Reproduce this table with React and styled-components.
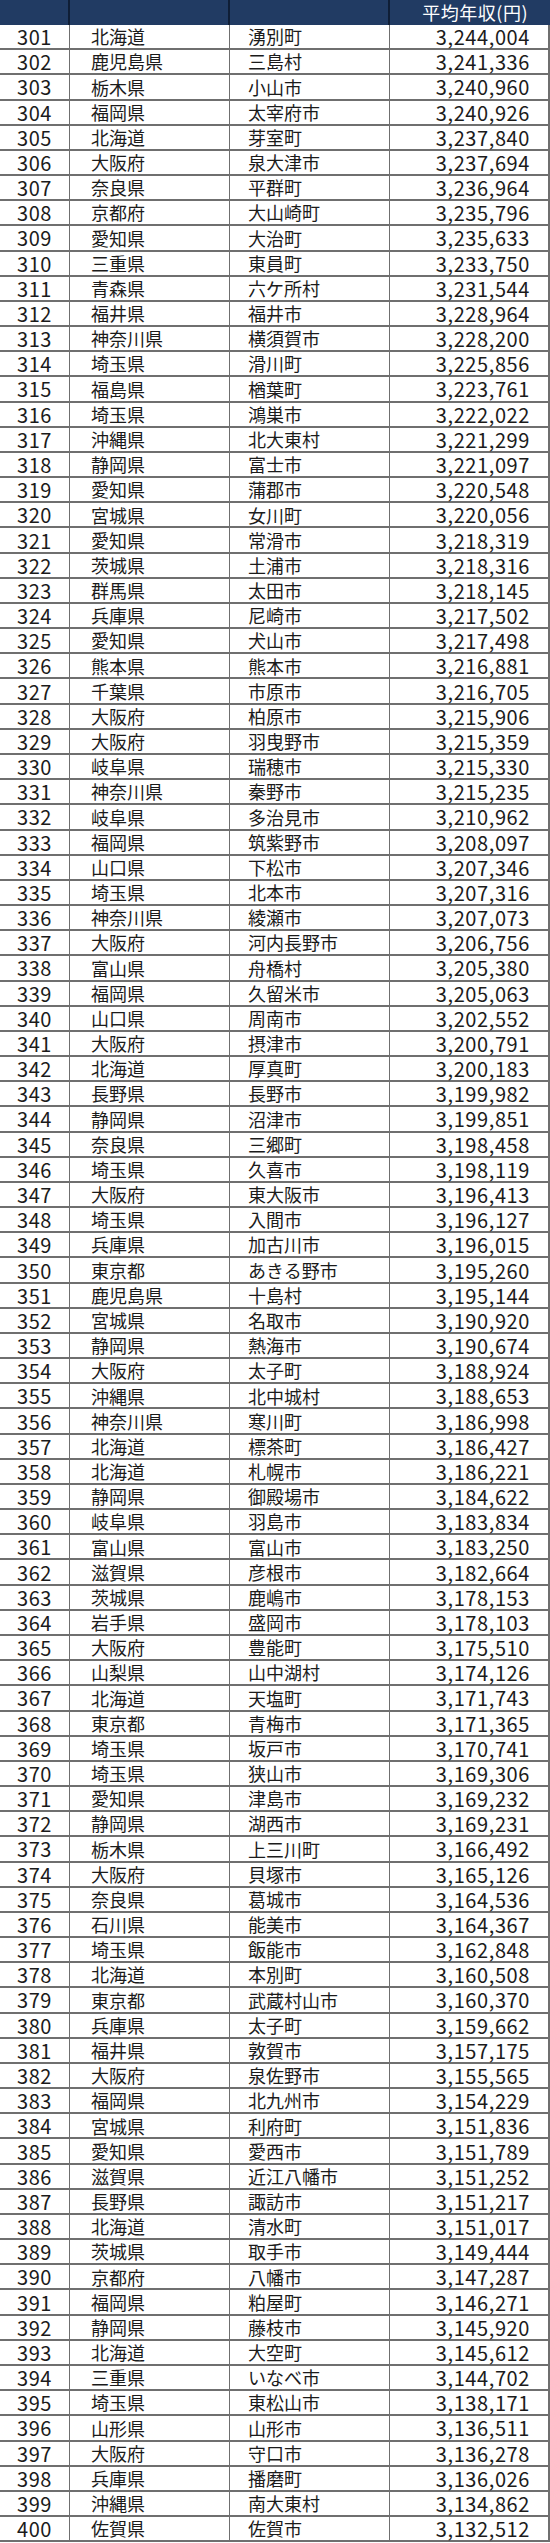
import styled, { createGlobalStyle } from 'styled-components';

const GlobalStyle = createGlobalStyle`
  html, body {
    margin: 0;
    padding: 0;
    background: #ffffff;
  }
  body {
    font-family: "Noto Sans CJK JP", "Noto Sans", sans-serif;
    color: #1b1b1b;
  }
`;

const ROWS = `
301,北海道,湧別町,3244004
302,鹿児島県,三島村,3241336
303,栃木県,小山市,3240960
304,福岡県,太宰府市,3240926
305,北海道,芽室町,3237840
306,大阪府,泉大津市,3237694
307,奈良県,平群町,3236964
308,京都府,大山崎町,3235796
309,愛知県,大治町,3235633
310,三重県,東員町,3233750
311,青森県,六ケ所村,3231544
312,福井県,福井市,3228964
313,神奈川県,横須賀市,3228200
314,埼玉県,滑川町,3225856
315,福島県,楢葉町,3223761
316,埼玉県,鴻巣市,3222022
317,沖縄県,北大東村,3221299
318,静岡県,富士市,3221097
319,愛知県,蒲郡市,3220548
320,宮城県,女川町,3220056
321,愛知県,常滑市,3218319
322,茨城県,土浦市,3218316
323,群馬県,太田市,3218145
324,兵庫県,尼崎市,3217502
325,愛知県,犬山市,3217498
326,熊本県,熊本市,3216881
327,千葉県,市原市,3216705
328,大阪府,柏原市,3215906
329,大阪府,羽曳野市,3215359
330,岐阜県,瑞穂市,3215330
331,神奈川県,秦野市,3215235
332,岐阜県,多治見市,3210962
333,福岡県,筑紫野市,3208097
334,山口県,下松市,3207346
335,埼玉県,北本市,3207316
336,神奈川県,綾瀬市,3207073
337,大阪府,河内長野市,3206756
338,富山県,舟橋村,3205380
339,福岡県,久留米市,3205063
340,山口県,周南市,3202552
341,大阪府,摂津市,3200791
342,北海道,厚真町,3200183
343,長野県,長野市,3199982
344,静岡県,沼津市,3199851
345,奈良県,三郷町,3198458
346,埼玉県,久喜市,3198119
347,大阪府,東大阪市,3196413
348,埼玉県,入間市,3196127
349,兵庫県,加古川市,3196015
350,東京都,あきる野市,3195260
351,鹿児島県,十島村,3195144
352,宮城県,名取市,3190920
353,静岡県,熱海市,3190674
354,大阪府,太子町,3188924
355,沖縄県,北中城村,3188653
356,神奈川県,寒川町,3186998
357,北海道,標茶町,3186427
358,北海道,札幌市,3186221
359,静岡県,御殿場市,3184622
360,岐阜県,羽島市,3183834
361,富山県,富山市,3183250
362,滋賀県,彦根市,3182664
363,茨城県,鹿嶋市,3178153
364,岩手県,盛岡市,3178103
365,大阪府,豊能町,3175510
366,山梨県,山中湖村,3174126
367,北海道,天塩町,3171743
368,東京都,青梅市,3171365
369,埼玉県,坂戸市,3170741
370,埼玉県,狭山市,3169306
371,愛知県,津島市,3169232
372,静岡県,湖西市,3169231
373,栃木県,上三川町,3166492
374,大阪府,貝塚市,3165126
375,奈良県,葛城市,3164536
376,石川県,能美市,3164367
377,埼玉県,飯能市,3162848
378,北海道,本別町,3160508
379,東京都,武蔵村山市,3160370
380,兵庫県,太子町,3159662
381,福井県,敦賀市,3157175
382,大阪府,泉佐野市,3155565
383,福岡県,北九州市,3154229
384,宮城県,利府町,3151836
385,愛知県,愛西市,3151789
386,滋賀県,近江八幡市,3151252
387,長野県,諏訪市,3151217
388,北海道,清水町,3151017
389,茨城県,取手市,3149444
390,京都府,八幡市,3147287
391,福岡県,粕屋町,3146271
392,静岡県,藤枝市,3145920
393,北海道,大空町,3145612
394,三重県,いなべ市,3144702
395,埼玉県,東松山市,3138171
396,山形県,山形市,3136511
397,大阪府,守口市,3136278
398,兵庫県,播磨町,3136026
399,沖縄県,南大東村,3134862
400,佐賀県,佐賀市,3132512
`
  .trim()
  .split('\n')
  .map((line) => {
    const [rank, pref, city, income] = line.split(',');
    return { rank, pref, city, income: Number(income).toLocaleString('en-US') };
  });

const Table = styled.div`
  width: 550px;
  display: flex;
  flex-direction: column;
`;

const HeaderRow = styled.div`
  display: grid;
  grid-template-columns: 70px 160px 160px 160px;
  height: 25px;
  background: #213b63;
`;

const HeaderCell = styled.div`
  display: flex;
  align-items: center;
  justify-content: ${(p) => (p.$right ? 'flex-end' : 'flex-start')};
  padding: 0 22px 0 0;
  border-right: ${(p) => (p.$last ? 'none' : '2px solid #0f1e36')};
  color: #ffffff;
  font-size: 18px;
  line-height: 1.15;
  letter-spacing: 0.5px;
  white-space: nowrap;
`;

const Row = styled.div`
  display: grid;
  grid-template-columns: 70px 160px 160px 160px;
  height: 25.18px;
  box-sizing: border-box;
  border-bottom: 2px solid #6f6f6f;
  border-right: 2px solid #6f6f6f;
`;

const Cell = styled.div`
  display: flex;
  align-items: center;
  justify-content: ${(p) =>
    p.$align === 'center' ? 'center' : p.$align === 'right' ? 'flex-end' : 'flex-start'};
  padding: ${(p) => p.$pad || '0'};
  border-right: ${(p) => (p.$last ? 'none' : '1.5px solid #6f6f6f')};
  font-size: ${(p) => p.$size || '18px'};
  letter-spacing: ${(p) => p.$spacing || '0'};
  line-height: 1.15;
  white-space: nowrap;
`;

export default function App() {
  return (
    <>
      <GlobalStyle />
      <Table>
        <HeaderRow>
          <HeaderCell />
          <HeaderCell />
          <HeaderCell />
          <HeaderCell $right $last>
            平均年収(円)
          </HeaderCell>
        </HeaderRow>
        {ROWS.map((r) => (
          <Row key={r.rank}>
            <Cell $align="center" $size="20px" $spacing="0.5px">
              {r.rank}
            </Cell>
            <Cell $pad="0 0 0 21px">{r.pref}</Cell>
            <Cell $pad="0 0 0 18px">{r.city}</Cell>
            <Cell $align="right" $pad="0 20px 0 0" $size="20px" $spacing="0.6px" $last>
              {r.income}
            </Cell>
          </Row>
        ))}
      </Table>
    </>
  );
}
